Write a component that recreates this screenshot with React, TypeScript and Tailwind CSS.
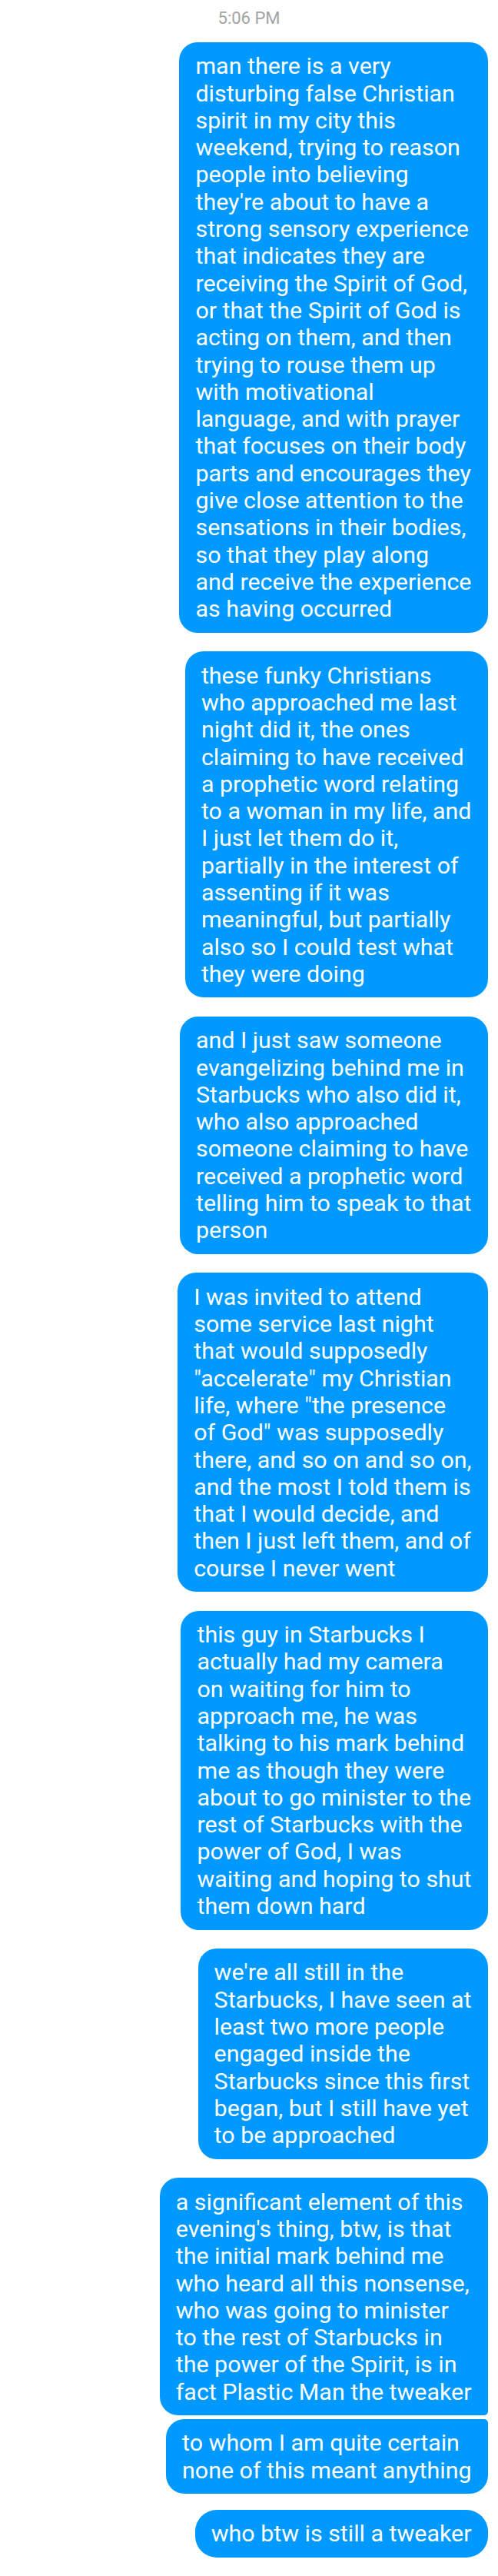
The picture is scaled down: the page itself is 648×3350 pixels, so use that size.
import React from "react";

type Msg = { lines: string[]; cls: string };

const msgs: Msg[] = [
  {
    cls: "rounded-[24px]",
    lines: [
      "man there is a very",
      "disturbing false Christian",
      "spirit in my city this",
      "weekend, trying to reason",
      "people into believing",
      "they're about to have a",
      "strong sensory experience",
      "that indicates they are",
      "receiving the Spirit of God,",
      "or that the Spirit of God is",
      "acting on them, and then",
      "trying to rouse them up",
      "with motivational",
      "language, and with prayer",
      "that focuses on their body",
      "parts and encourages they",
      "give close attention to the",
      "sensations in their bodies,",
      "so that they play along",
      "and receive the experience",
      "as having occurred",
    ],
  },
  {
    cls: "rounded-[24px] mt-[24.5px]",
    lines: [
      "these funky Christians",
      "who approached me last",
      "night did it, the ones",
      "claiming to have received",
      "a prophetic word relating",
      "to a woman in my life, and",
      "I just let them do it,",
      "partially in the interest of",
      "assenting if it was",
      "meaningful, but partially",
      "also so I could test what",
      "they were doing",
    ],
  },
  {
    cls: "rounded-[24px] mt-[24.5px]",
    lines: [
      "and I just saw someone",
      "evangelizing behind me in",
      "Starbucks who also did it,",
      "who also approached",
      "someone claiming to have",
      "received a prophetic word",
      "telling him to speak to that",
      "person",
    ],
  },
  {
    cls: "rounded-[24px] mt-[24.5px]",
    lines: [
      "I was invited to attend",
      "some service last night",
      "that would supposedly",
      "\"accelerate\" my Christian",
      "life, where \"the presence",
      "of God\" was supposedly",
      "there, and so on and so on,",
      "and the most I told them is",
      "that I would decide, and",
      "then I just left them, and of",
      "course I never went",
    ],
  },
  {
    cls: "rounded-[24px] mt-[24.5px]",
    lines: [
      "this guy in Starbucks I",
      "actually had my camera",
      "on waiting for him to",
      "approach me, he was",
      "talking to his mark behind",
      "me as though they were",
      "about to go minister to the",
      "rest of Starbucks with the",
      "power of God, I was",
      "waiting and hoping to shut",
      "them down hard",
    ],
  },
  {
    cls: "rounded-[24px] mt-[24.5px]",
    lines: [
      "we're all still in the",
      "Starbucks, I have seen at",
      "least two more people",
      "engaged inside the",
      "Starbucks since this first",
      "began, but I still have yet",
      "to be approached",
    ],
  },
  {
    cls: "rounded-tl-[24px] rounded-tr-[24px] rounded-bl-[24px] rounded-br-[5px] mt-[24.5px]",
    lines: [
      "a significant element of this",
      "evening's thing, btw, is that",
      "the initial mark behind me",
      "who heard all this nonsense,",
      "who was going to minister",
      "to the rest of Starbucks in",
      "the power of the Spirit, is in",
      "fact Plastic Man the tweaker",
    ],
  },
  {
    cls: "rounded-tl-[24px] rounded-tr-[5px] rounded-bl-[24px] rounded-br-[24px] mt-[4.7px]",
    lines: ["to whom I am quite certain", "none of this meant anything"],
  },
  {
    cls: "rounded-[28px] mt-[20.7px]",
    lines: ["who btw is still a tweaker"],
  },
];

export default function App() {
  return (
    <div className="w-[648px] h-[3350px] bg-white font-['Roboto',sans-serif] overflow-hidden">
      <div className="pt-[11px] text-center text-[22px] leading-[26px] text-[#a3a3a3]">
        5:06 PM
      </div>
      <div className="mt-[18px] flex flex-col items-end pr-[13.5px]">
        {msgs.map((m, i) => (
          <div
            key={i}
            className={`bg-[#0099ff] text-white text-[30.4px] leading-[35.3px] px-[21px] py-[13.3px] whitespace-nowrap ${m.cls}`}
          >
            {m.lines.map((l, j) => (
              <div key={j}>{l}</div>
            ))}
          </div>
        ))}
      </div>
    </div>
  );
}
